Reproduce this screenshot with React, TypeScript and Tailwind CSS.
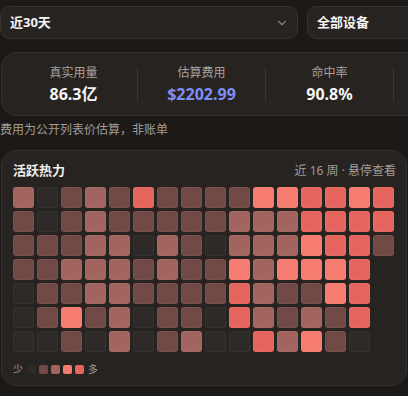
import React from "react";
import { ChevronDown } from "lucide-react";

const GRID: number[][] = [
  [2, 0, 1, 2, 1, 4, 1, 1, 1, 1, 3, 3, 4, 4, 3, 4],
  [1, 0, 1, 2, 1, 1, 1, 1, 1, 2, 2, 2, 4, 4, 4, 4],
  [1, 1, 1, 2, 2, 0, 2, 1, 0, 2, 2, 2, 3, 4, 4, 1],
  [1, 1, 2, 2, 2, 1, 2, 1, 1, 3, 2, 3, 3, 3, 4, -1],
  [0, 1, 1, 2, 2, 1, 1, 1, 1, 4, 2, 1, 1, 3, 4, -1],
  [0, 1, 3, 1, 2, 0, 1, 1, 0, 4, 2, 1, 2, 1, 4, -1],
  [0, 0, 1, 0, 2, 0, 1, 2, 0, 0, 4, 2, 3, 1, 0, -1],
];

const LEVEL = [
  "bg-[#2d2a28]",
  "bg-[#714a46]",
  "bg-[#a1645e]",
  "bg-[#f67c72]",
  "bg-[#e6665f]",
];

function Stat({ label, value, accent }: { label: string; value: string; accent?: boolean }) {
  return (
    <div className="w-[127px] shrink-0 flex flex-col items-center">
      <div className="text-[12px] leading-[18px] text-[#a8a29e]">{label}</div>
      <div
        className={
          "mt-[1px] text-[16px] leading-[22px] font-bold " +
          (accent ? "text-[#7f8ef6]" : "text-[#f5f5f4]")
        }
      >
        {value}
      </div>
    </div>
  );
}

function Sep() {
  return <div className="w-px h-[35px] shrink-0 bg-[#3a3633]" />;
}

export default function App() {
  return (
    <div
      className="w-[408px] h-[396px] overflow-hidden bg-[#1c1917] text-[#f5f5f4]"
      style={{ fontFamily: '"Noto Sans", "Noto Sans CJK SC", sans-serif' }}
    >
      <div className="w-[560px] pt-[6px]">
        {/* selects */}
        <div className="flex gap-[9px]">
          <div className="w-[298px] h-[33px] rounded-[10px] border border-[#37332f] bg-[#272321] flex items-center justify-between pl-[9px] pr-[8px]">
            <span className="text-[13px] font-bold text-[#f5f5f4]">近30天</span>
            <ChevronDown size={14} strokeWidth={2} className="text-[#8a8480]" />
          </div>
          <div className="w-[160px] h-[33px] rounded-[10px] border border-[#37332f] bg-[#272321] flex items-center pl-[9px]">
            <span className="text-[13px] font-bold text-[#f5f5f4]">全部设备</span>
          </div>
        </div>

        {/* stats card */}
        <div className="mt-[13px] ml-px w-[540px] h-[64px] rounded-[16px] border border-[#35312e] bg-[#272321] flex items-center pl-[8px]">
          <Stat label="真实用量" value="86.3亿" />
          <Sep />
          <Stat label="估算费用" value="$2202.99" accent />
          <Sep />
          <Stat label="命中率" value="90.8%" />
          <Sep />
        </div>

        <div className="mt-[5px] text-[12px] leading-[18px] text-[#a29c97]">
          费用为公开列表价估算，非账单
        </div>

        {/* heatmap card */}
        <div className="mt-[11px] ml-px w-[406px] h-[236px] rounded-[16px] border border-[#35312e] bg-[#272321] px-[11px] pt-[10px]">
          <div className="flex items-center justify-between h-[20px]">
            <span className="text-[13px] font-bold text-[#f0eeec]">活跃热力</span>
            <span className="text-[12px] text-[#a29c97] mr-[-1px]">近 16 周 · 悬停查看</span>
          </div>
          <div className="mt-[6px] flex flex-col gap-[3px]">
            {GRID.map((row, r) => (
              <div key={r} className="flex gap-[3px]">
                {row.map((v, c) =>
                  v < 0 ? (
                    <div key={c} className="w-[21px] h-[21px]" />
                  ) : (
                    <div
                      key={c}
                      className={
                        "w-[21px] h-[21px] rounded-[3px] border border-white/[0.04] " + LEVEL[v]
                      }
                    />
                  )
                )}
              </div>
            ))}
          </div>
          <div className="mt-[11px] flex items-center gap-[3px] h-[12px]">
            <span className="text-[10px] leading-[12px] text-[#a29c97] mr-[1px]">少</span>
            {LEVEL.map((cls, i) => (
              <div key={i} className={"w-[9px] h-[9px] rounded-[2px] " + cls} />
            ))}
            <span className="text-[10px] leading-[12px] text-[#a29c97] ml-[1px]">多</span>
          </div>
        </div>
      </div>
    </div>
  );
}
